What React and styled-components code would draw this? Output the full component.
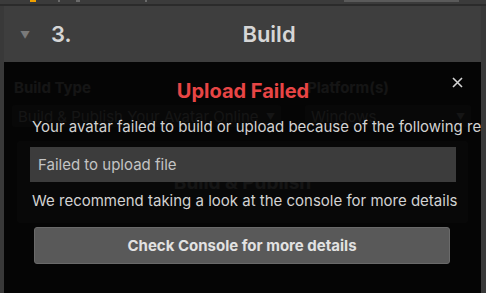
import styled, { createGlobalStyle } from 'styled-components';

const GlobalStyle = createGlobalStyle`
  body {
    margin: 0;
    background: #393939;
    font-family: Inter, "Noto Sans", sans-serif;
  }
`;

export default function App() {
    return (
        <Window>
            <GlobalStyle />
            <TopBar>
                <Tick $left={30} $width={6} $color="#f0a000" />
                <Tick $left={58} $width={2} $color="#6a6a6a" />
                <Tick $left={76} $width={4} $color="#6a6a6a" />
                <Tick $left={145} $width={2} $color="#6a6a6a" />
                <Tick $left={344} $width={115} $color="#5a5a5a" />
            </TopBar>
            <Main>
                <Panel>
                    <Header>
                        <Arrow>▼</Arrow>
                        <StepNumber>3.</StepNumber>
                        <StepTitle>Build</StepTitle>
                    </Header>
                    <Body>
                        <Fields>
                            <Field>
                                <Label>Build Type</Label>
                                <Dropdown>
                                    <span>Build &amp; Publish Your Avatar Online</span>
                                    <Caret>▼</Caret>
                                </Dropdown>
                            </Field>
                            <Field>
                                <Label>Platform(s)</Label>
                                <Dropdown>
                                    <span>Windows</span>
                                    <Caret>▼</Caret>
                                </Dropdown>
                            </Field>
                        </Fields>
                        <BigButton>Build &amp; Publish</BigButton>

                        <Overlay>
                            <CloseButton>
                                <svg width="11" height="11" viewBox="0 0 11 11">
                                    <path d="M1 1 L10 10 M10 1 L1 10" stroke="#d4d4d4" strokeWidth="1.6" />
                                </svg>
                            </CloseButton>
                            <Modal>
                                <ModalTitle>Upload Failed</ModalTitle>
                                <Message>Your avatar failed to build or upload because of the following reason:</Message>
                                <ErrorBox>Failed to upload file</ErrorBox>
                                <Message $gap={9}>We recommend taking a look at the console for more details</Message>
                                <ConsoleButton>Check Console for more details</ConsoleButton>
                            </Modal>
                        </Overlay>
                    </Body>
                </Panel>
            </Main>
        </Window>
    )
}

const Window = styled.div`
width: 486px;
height: 293px;
overflow: hidden;
display: flex;
flex-direction: column;
background: #393939;
`
const TopBar = styled.div`
position: relative;
height: 4px;
flex-shrink: 0;
background: #3b3b3b;
border-bottom: 2px solid #2b2b2b;
`
const Tick = styled.div`
position: absolute;
top: 0;
left: ${p => p.$left}px;
width: ${p => p.$width}px;
height: 2px;
background: ${p => p.$color};
`
const Main = styled.div`
flex: 1;
display: flex;
padding-left: 4px;
min-height: 0;
`
const Panel = styled.div`
width: 477px;
display: flex;
flex-direction: column;
background: #383838;
`
const Header = styled.div`
height: 56px;
flex-shrink: 0;
display: flex;
align-items: center;
background: #3e3e3e;
color: #d6d6d6;
`
const Arrow = styled.span`
width: 11px;
margin-left: 16px;
margin-top: 2px;
font-size: 10px;
color: #7a7a7a;
`
const StepNumber = styled.span`
margin-left: 20px;
width: 30px;
font-size: 22px;
font-weight: 600;
`
const StepTitle = styled.span`
flex: 1;
padding-right: 24px;
text-align: center;
font-size: 22px;
font-weight: 600;
`
const Body = styled.div`
position: relative;
flex: 1;
display: flex;
flex-direction: column;
padding: 16px 8px 0 8px;
color: #d2d2d2;
`
const Fields = styled.div`
display: grid;
grid-template-columns: 269px 166px;
column-gap: 24px;
`
const Field = styled.div`
display: flex;
flex-direction: column;
gap: 8px;
`
const Label = styled.div`
padding-left: 2px;
font-size: 15px;
font-weight: 700;
`
const Dropdown = styled.div`
height: 22px;
display: flex;
align-items: center;
justify-content: space-between;
padding: 0 6px;
background: #515151;
border-radius: 3px;
font-size: 15px;
white-space: nowrap;
overflow: hidden;
`
const Caret = styled.span`
font-size: 9px;
`
const BigButton = styled.div`
margin: 14px 5px 0 5px;
height: 82px;
display: flex;
align-items: center;
justify-content: center;
background: #585858;
border-radius: 4px;
font-size: 19px;
font-weight: 700;
`
const Overlay = styled.div`
position: absolute;
inset: 0;
overflow: hidden;
background: rgba(0, 0, 0, 0.9);
`
const CloseButton = styled.div`
position: absolute;
top: 15px;
right: 18px;
width: 11px;
height: 11px;
display: flex;
`
const Modal = styled.div`
width: 426px;
margin-left: 26px;
padding-top: 17px;
display: flex;
flex-direction: column;
`
const ModalTitle = styled.div`
text-align: center;
font-size: 20px;
line-height: 24px;
font-weight: 700;
color: #e84545;
`
const Message = styled.div`
padding-left: 2px;
font-size: 15px;
line-height: 20px;
margin-top: ${p => p.$gap ?? 14}px;
white-space: nowrap;
color: #d2d2d2;
`
const ErrorBox = styled.div`
margin-top: 10px;
height: 35px;
display: flex;
align-items: center;
padding-left: 8px;
background: #3c3c3c;
font-size: 15px;
color: #c4c4c4;
`
const ConsoleButton = styled.button`
margin: 16px 6px 0 4px;
height: 37px;
background: #595959;
border: 1px solid #6a6a6a;
border-radius: 3px;
font-family: inherit;
font-size: 15px;
font-weight: 700;
color: #e2e2e2;
`
